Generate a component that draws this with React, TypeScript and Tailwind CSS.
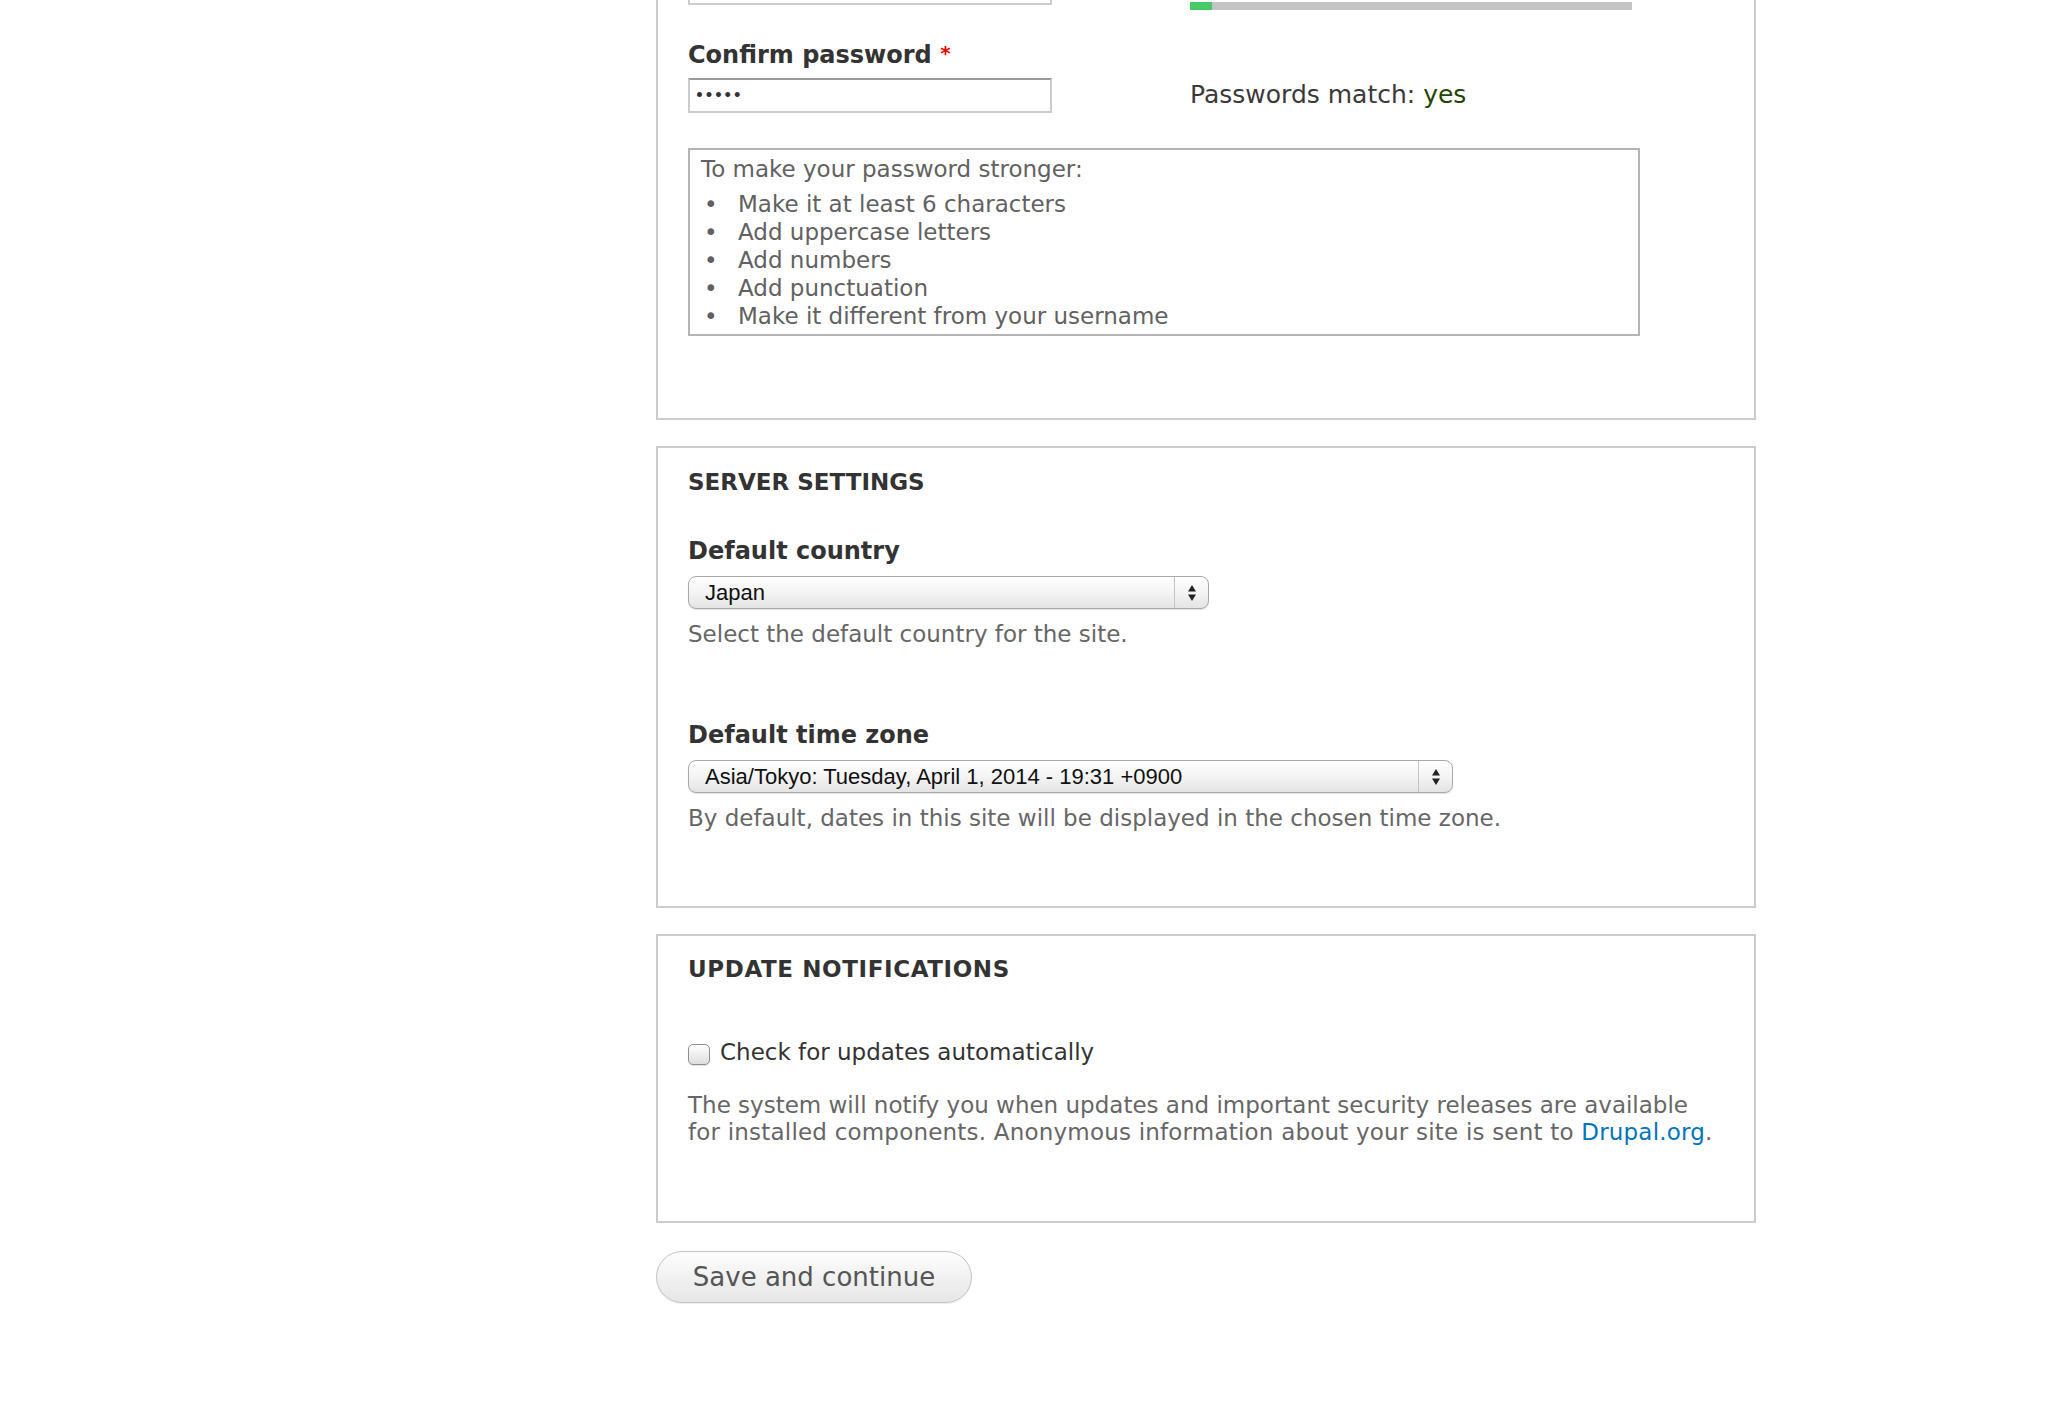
import React from "react";

function Arrows() {
  return (
    <svg width="10" height="18" viewBox="0 0 10 18" aria-hidden="true">
      <polygon points="5,1 9,7.5 1,7.5" fill="#222" />
      <polygon points="1,10.5 9,10.5 5,17" fill="#222" />
    </svg>
  );
}

function MacSelect({ className, text }: { className: string; text: string }) {
  return (
    <div
      className={`flex h-[33px] items-stretch rounded-[8px] border border-[#a9a9a9] bg-linear-to-b from-white via-[#f4f4f4] to-[#e4e4e4] shadow-[0_1px_1px_rgba(0,0,0,0.12)] ${className}`}
    >
      <span className="flex flex-1 items-center pl-[16px] font-['Liberation_Sans',Arial,sans-serif] text-[22px] leading-none text-[#111]">
        {text}
      </span>
      <span className="flex w-[34px] items-center justify-center border-l border-[#c4c4c4]">
        <Arrows />
      </span>
    </div>
  );
}

function Legend({ children, className }: { children: React.ReactNode; className: string }) {
  return (
    <div className={`text-[23px] font-bold uppercase leading-[30px] text-[#333] ${className}`}>
      {children}
    </div>
  );
}

function Label({ children, className }: { children: React.ReactNode; className: string }) {
  return (
    <div className={`text-[24px] font-bold leading-[30px] text-[#333] ${className}`}>
      {children}
    </div>
  );
}

export default function App() {
  const tips = [
    "Make it at least 6 characters",
    "Add uppercase letters",
    "Add numbers",
    "Add punctuation",
    "Make it different from your username",
  ];
  return (
    <div className="min-h-screen w-full bg-white font-['DejaVu_Sans','Liberation_Sans',sans-serif] text-[#333]">
      <div className="ml-[656px] w-[1100px] pb-[100px]">
        {/* Account fieldset (top cut off) */}
        <div className="border-x-2 border-b-2 border-[#cccccc] px-[30px] pb-[82px]">
          <div className="flex items-start">
            <div className="h-[5px] w-[364px] border-x-2 border-b-2 border-[#cccccc]" />
            <div className="ml-[138px] mt-[2px] flex h-[8px] w-[442px] bg-[#c4c4c4]">
              <div className="h-full w-[22px] bg-[#47c965]" />
            </div>
          </div>
          <div className="flex items-start">
            <div className="w-[364px]">
              <Label className="mt-[30px]">
                Confirm password{" "}
                <span className="align-top text-[20px] leading-[26px] text-[#e00]">*</span>
              </Label>
              <div className="mt-[8px] flex h-[35px] items-center border-2 border-[#cccccc] border-t-[#9a9a9a] pl-[5px] text-[14px] font-bold tracking-[0.5px] text-[#333]">
                •••••
              </div>
            </div>
            <div className="ml-[138px] mt-[70px] text-[25px] leading-[30px] text-[#3a3a3a]">
              Passwords match: <span className="text-[#234600]">yes</span>
            </div>
          </div>
          <div className="mt-[35px] w-[952px] border-2 border-[#b4b4b4] pb-[4px] pl-[11px] pt-[5px] text-[23px] leading-[28px] text-[#616161]">
            <p>To make your password stronger:</p>
            <ul className="mt-[7px]">
              {tips.map((t) => (
                <li key={t} className="flex">
                  <span className="w-[37px] pl-[3px]">•</span>
                  <span>{t}</span>
                </li>
              ))}
            </ul>
          </div>
        </div>

        {/* Server settings */}
        <div className="mt-[26px] border-2 border-[#cccccc] px-[30px] pb-[74px] pt-[19px]">
          <Legend className="">Server settings</Legend>
          <Label className="mt-[39px]">Default country</Label>
          <MacSelect className="mt-[10px] w-[521px]" text="Japan" />
          <p className="mt-[11px] text-[23px] leading-[28px] text-[#666]">
            Select the default country for the site.
          </p>
          <Label className="mt-[72px]">Default time zone</Label>
          <MacSelect
            className="mt-[10px] w-[765px]"
            text="Asia/Tokyo: Tuesday, April 1, 2014 - 19:31 +0900"
          />
          <p className="mt-[11px] text-[23px] leading-[28px] text-[#666]">
            By default, dates in this site will be displayed in the chosen time zone.
          </p>
        </div>

        {/* Update notifications */}
        <div className="mt-[26px] border-2 border-[#cccccc] px-[30px] pb-[75px] pt-[18px]">
          <Legend className="tracking-[0.6px]">Update notifications</Legend>
          <div className="mt-[54px] flex items-center">
            <span className="mt-[4px] h-[21px] w-[22px] rounded-[5px] border border-[#8f8f8f] bg-linear-to-b from-white to-[#dedede] shadow-[0_1px_1px_rgba(0,0,0,0.12)]" />
            <span className="ml-[10px] text-[23px] leading-[28px] text-[#333]">
              Check for updates automatically
            </span>
          </div>
          <p className="mt-[26px] text-[23px] leading-[27px] text-[#666]">
            The system will notify you when updates and important security releases are available
            <br />
            <span className="tracking-[0.2px]">
              for installed components. Anonymous information about your site is sent to{" "}
              <a className="text-[#0074bd]" href="#">
                Drupal.org
              </a>
              .
            </span>
          </p>
        </div>

        <button className="mt-[28px] flex h-[52px] w-[316px] items-center justify-center rounded-full border border-[#c4c4c4] bg-linear-to-b from-[#fdfdfd] to-[#e6e6e6] text-[26px] text-[#555] shadow-[0_1px_1px_rgba(0,0,0,0.08)]">
          Save and continue
        </button>
      </div>
    </div>
  );
}
